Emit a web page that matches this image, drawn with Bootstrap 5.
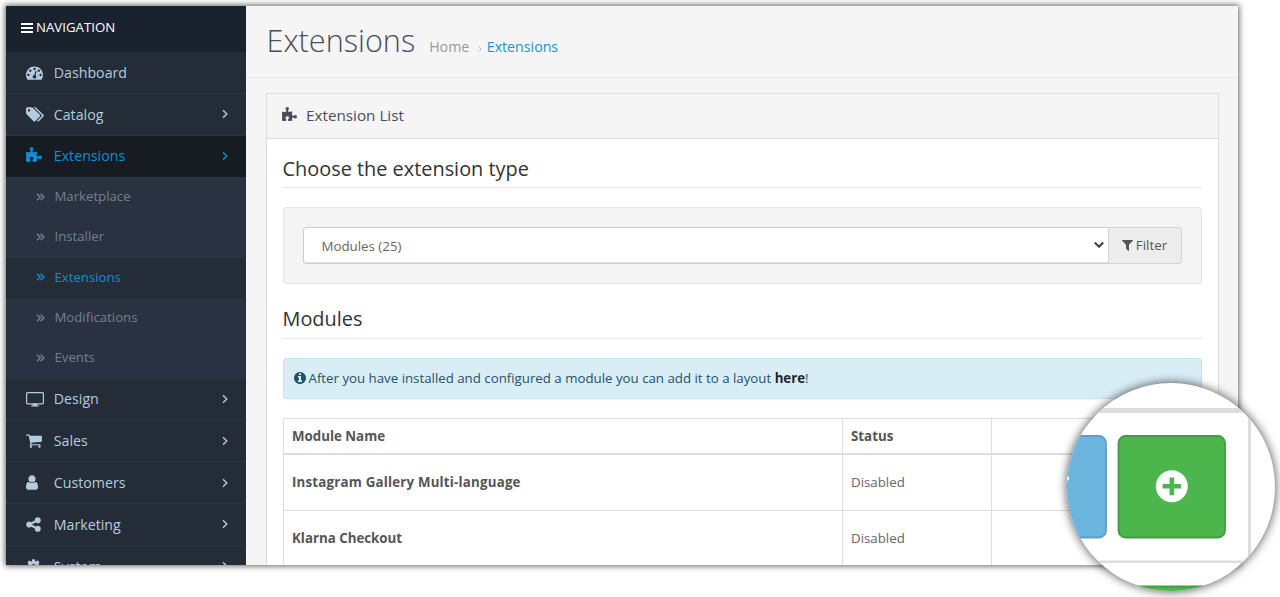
<!DOCTYPE html>
<html lang="en">
<head>
<meta charset="utf-8">
<meta name="viewport" content="width=device-width, initial-scale=1">
<title>Extensions</title>
<link href="https://cdn.jsdelivr.net/npm/bootstrap@5.3.0/dist/css/bootstrap.min.css" rel="stylesheet">
<style>
body{font-family:"Open Sans","Noto Sans",sans-serif;font-size:12.5px;color:#666;background:#fff;height:597px;overflow:hidden;position:relative}
svg{fill:currentColor;display:block;flex:none}
.app-window{margin:6px 0 0 6px;width:1232px;height:558.6px;background:#f5f5f5;box-shadow:0 0 6px 1px rgba(0,0,0,.62)}
.side{width:239.5px;background:#242d37;flex:none}
.side-head{height:46px;background:#1a222e;color:#fff;font-size:13.25px;padding-left:15px;padding-bottom:3px;gap:3px}
.menu-row{height:41.8px;font-size:14.2px;color:#b3cbdd;padding:0 17.8px 0 20px;border-bottom:1px solid #2a3641;text-decoration:none}
.menu-row .ico{width:27.8px}
.menu-row.on{background:#171b22;color:#0d8fd6;border-color:#171b22}
.sub-row{height:40.25px;font-size:13.2px;color:#74808f;padding:0 0 1.2px 30px;background:#2a3140;text-decoration:none}
.sub-row svg{margin-right:9.5px}
.sub-row.on{background:#242d37;color:#0d8fd6}
.chev{fill:none;stroke:currentColor;stroke-width:1.4}
.page-top{height:71.5px;border-bottom:1px solid #e8e8e8;padding:0 0 0 21px}
.page-top h1{font-weight:300;font-size:30.6px;color:#4c4d5a;line-height:69px}
.crumbs{font-size:14.2px;color:#999;margin-left:14px}
.crumbs a.here{color:#1e91cf;text-decoration:none}
.crumbs svg{stroke:#bbb;stroke-width:1;margin:0 4.5px 0 9px}
.panel-box{margin:15.4px 19.5px 0 20.5px;border:1px solid #dcdcdc;height:600px;background:#fff}
.panel-title{height:44.9px;background:#f5f5f5;border-bottom:1px solid #dcdcdc;font-size:15.25px;color:#4c4d5a;padding:0 0 1px 15px;gap:9px}
.panel-in{padding:0 15.5px}
.sec{font-size:19.9px;color:#333;border-bottom:1px solid #e5e5e5;margin:0;font-weight:400}
.well-box{height:77px;background:#f4f4f4;border:1px solid #e5e5e5;border-radius:3px;padding:19px;margin:19px 0 19px}
.well-box .form-select{font-size:13.3px;color:#666;border-color:#ccc;border-radius:3px 0 0 3px;padding:1px 18px 0;background-image:none;height:37px;box-shadow:inset 0 -1px 0 #e3e3e3;line-height:35px}
.btn-filter{width:74px;height:37px;background:#ededed;border:1px solid #d3d3d3;color:#555;font-size:13.4px;border-radius:0 3px 3px 0;padding:0 1px 0 0;gap:3px}
.arrow-down{right:78px;top:13px;z-index:6;position:absolute;fill:none;stroke:#444;stroke-width:2.2}
.note{height:41px;background:#d9edf6;border:1px solid #bce8f1;border-radius:3px;color:#245269;padding:1px 10px 0;font-size:13.27px;gap:3px;margin:19px 0 19px}
.note svg{margin-bottom:2px}
.note b{color:#1b2730}
.grid-table{font-size:13.3px;color:#666;border:1px solid #e2e2e2;table-layout:fixed;--bs-table-color:#666;--bs-table-bg:#fff}
.grid-table th,.grid-table td{border:1px solid #ddd;padding:1px 8px 0 8.5px;vertical-align:middle}
.grid-table th{height:36px;border-bottom:2px solid #ddd;color:#555}
.grid-table td{height:56px}
.grid-table td b{color:#555}
.grid-table .wide-name{letter-spacing:.2px}
.lens{position:absolute;left:1067px;top:383px;width:207.5px;height:207.5px;border-radius:50%;background:#fff;box-shadow:0 0 10px 1px rgba(0,0,0,.6);overflow:hidden}
</style>
</head>
<body>
<svg width="0" height="0" class="d-none">
<symbol id="gauge" viewBox="0 0 1792 1792"><path d="M384 1152q0-53-37.5-90.5t-90.5-37.5-90.5 37.5-37.5 90.5 37.5 90.5 90.5 37.5 90.5-37.5 37.5-90.5zm192-448q0-53-37.5-90.5t-90.5-37.5-90.5 37.5-37.5 90.5 37.5 90.5 90.5 37.5 90.5-37.5 37.5-90.5zm428 481l101-382q6-26-7.5-48.5t-38.5-29.5-48 6.5-30 39.5l-101 382q-60 5-107 43.5t-63 98.5q-20 77 20 146t117 89 146-20 89-117q16-60-6-117t-72-91zm660-33q0-53-37.5-90.5t-90.5-37.5-90.5 37.5-37.5 90.5 37.5 90.5 90.5 37.5 90.5-37.5 37.5-90.5zm-640-640q0-53-37.5-90.5t-90.5-37.5-90.5 37.5-37.5 90.5 37.5 90.5 90.5 37.5 90.5-37.5 37.5-90.5zm448 192q0-53-37.5-90.5t-90.5-37.5-90.5 37.5-37.5 90.5 37.5 90.5 90.5 37.5 90.5-37.5 37.5-90.5zm320 448q0 261-141 483-19 29-54 29h-1402q-35 0-54-29-141-221-141-483 0-182 71-348t191-286 286-191 348-71 348 71 286 191 191 286 71 348z"/></symbol>
<symbol id="tags" viewBox="0 0 1920 1792"><path d="M448 448q0-53-37.5-90.5t-90.5-37.5-90.5 37.5-37.5 90.5 37.5 90.5 90.5 37.5 90.5-37.5 37.5-90.5zm1067 576q0 53-37 90l-491 492q-39 37-91 37-53 0-90-37l-715-716q-38-37-64.5-101t-26.5-117v-416q0-52 38-90t90-38h416q53 0 117 26.5t102 64.5l715 714q37 39 37 91zm384 0q0 53-37 90l-491 492q-39 37-91 37-36 0-59-14t-53-45l470-470q37-37 37-90 0-52-37-91l-715-714q-38-38-102-64.5t-117-26.5h224q53 0 117 26.5t102 64.5l715 714q37 39 37 91z"/></symbol>
<symbol id="puzzle" viewBox="64 0 1664 1792"><path d="M1728 1098q0 81-44.5 135t-123.5 54q-41 0-77.5-17.5t-59-38-56.5-38-71-17.5q-110 0-110 124 0 39 16 115t15 115v5q-22 0-33 1-34 3-97.5 11.5t-115.5 13.5-98 5q-61 0-103-26.5t-42-83.5q0-37 17.5-71t38-56.5 38-59 17.5-77.5q0-79-54-123.5t-135-44.5q-84 0-143 45.5t-59 127.5q0 43 15 83t33.5 64.5 33.5 53 15 50.5q0 45-46 89-37 35-117 35-95 0-245-24-9-2-27.5-4t-27.5-4l-13-2q-1 0-3-1-2 0-2-1v-1024q2 1 17.5 3.5t34 5 21.5 3.5q150 24 245 24 80 0 117-35 46-44 46-89 0-22-15-50.5t-33.5-53-33.5-64.5-15-83q0-82 59-127.5t144-45.5q80 0 134 44.5t54 123.5q0 41-17.5 77.5t-38 59-38 56.5-17.5 71q0 57 42 83.5t103 26.5q64 0 180-15t163-17v2q-1 2-3.5 17.5t-5 34-3.5 21.5q-24 150-24 245 0 80 35 117 44 46 89 46 22 0 50.5-15t53-33.5 64.5-33.5 83-15q82 0 127.5 59t45.5 143z"/></symbol>
<symbol id="desktop" viewBox="0 0 18 15"><rect x=".6" y=".6" width="16.8" height="11.2" rx="1" fill="none" stroke="currentColor" stroke-width="1.2"/><path d="M7 11.8h4l.5 1.7h1.3v1H5.2v-1h1.3z"/></symbol>
<symbol id="cart" viewBox="64 0 1664 1792"><path d="M704 1536q0 52-38 90t-90 38-90-38-38-90 38-90 90-38 90 38 38 90zm896 0q0 52-38 90t-90 38-90-38-38-90 38-90 90-38 90 38 38 90zm128-1088v512q0 24-16.5 42.5t-40.5 21.5l-1044 122q13 60 13 70 0 16-24 64h920q26 0 45 19t19 45-19 45-45 19h-1024q-26 0-45-19t-19-45q0-11 8-31.5t16-36 21.5-40 15.5-29.5l-177-823h-204q-26 0-45-19t-19-45 19-45 45-19h256q16 0 28.5 6.5t19.5 15.5 13 24.5 8 26 5.5 29.5 4.5 26h1201q26 0 45 19t19 45z"/></symbol>
<symbol id="user" viewBox="256 0 1280 1792"><path d="M1536 1399q0 109-62.5 187t-150.5 78h-854q-88 0-150.5-78t-62.5-187q0-85 8.5-160.5t31.5-152 58.5-131 94-89 134.5-34.5q131 128 313 128t313-128q76 0 134.5 34.5t94 89 58.5 131 31.5 152 8.5 160.5zm-256-887q0 159-112.5 271.5t-271.5 112.5-271.5-112.5-112.5-271.5 112.5-271.5 271.5-112.5 271.5 112.5 112.5 271.5z"/></symbol>
<symbol id="share" viewBox="128 0 1536 1792"><path d="M1344 1024q133 0 226.5 93.5t93.5 226.5-93.5 226.5-226.5 93.5-226.5-93.5-93.5-226.5q0-12 2-34l-360-180q-92 86-218 86-133 0-226.5-93.5t-93.5-226.5 93.5-226.5 226.5-93.5q126 0 218 86l360-180q-2-22-2-34 0-133 93.5-226.5t226.5-93.5 226.5 93.5 93.5 226.5-93.5 226.5-226.5 93.5q-126 0-218-86l-360 180q2 22 2 34t-2 34l360 180q92-86 218-86z"/></symbol>
<symbol id="cog" viewBox="128 0 1536 1792"><path d="M1152 896q0-106-75-181t-181-75-181 75-75 181 75 181 181 75 181-75 75-181zm512-109v222q0 12-8 23t-20 13l-185 28q-19 54-39 91 35 50 107 138 10 12 10 25t-9 23q-27 37-99 108t-94 71q-12 0-26-9l-138-108q-44 23-91 38-16 136-29 186-7 28-36 28h-222q-14 0-24.5-8.5t-11.5-21.5l-28-184q-49-16-90-37l-141 107q-10 9-25 9-14 0-25-11-126-114-165-168-7-10-7-23 0-12 8-23 15-21 51-66.5t54-70.5q-27-50-41-99l-183-27q-13-2-21-12.5t-8-23.5v-222q0-12 8-23t19-13l186-28q14-46 39-92-40-57-107-138-10-12-10-24 0-10 9-23 26-36 98.5-107.5t94.5-71.5q13 0 26 10l138 107q44-23 91-38 16-136 29-186 7-28 36-28h222q14 0 24.5 8.5t11.5 21.5l28 184q49 16 90 37l142-107q9-9 24-9 13 0 25 10 129 119 165 170 7 8 7 22 0 12-8 23-15 21-51 66.5t-54 70.5q26 50 41 98l183 28q13 2 21 12.5t8 23.5z"/></symbol>
<symbol id="funnel" viewBox="192 0 1408 1792"><path d="M1595 295q17 41-14 70l-493 493v742q0 42-39 59-13 5-25 5-27 0-45-19l-256-256q-19-19-19-45v-486l-493-493q-31-29-14-70 17-39 59-39h1280q42 0 59 39z"/></symbol>
<symbol id="info" viewBox="128 128 1536 1536"><path d="M1152 1376v-160q0-14-9-23t-23-9h-96v-512q0-14-9-23t-23-9h-320q-14 0-23 9t-9 23v160q0 14 9 23t23 9h96v320h-96q-14 0-23 9t-9 23v160q0 14 9 23t23 9h448q14 0 23-9t9-23zm-128-896v-160q0-14-9-23t-23-9h-192q-14 0-23 9t-9 23v160q0 14 9 23t23 9h192q14 0 23-9t9-23zm640 416q0 209-103 385.5t-279.5 279.5-385.5 103-385.5-103-279.5-279.5-103-385.5 103-385.5 279.5-279.5 385.5-103 385.5 103 279.5 279.5 103 385.5z"/></symbol>
<symbol id="angle" viewBox="0 0 6 10"><path d="M1 1.2l3.8 3.8L1 8.800"/></symbol>
<symbol id="dbl" viewBox="0 0 9 8"><path d="M1 .7l3.3 3.3L1 7.3M4.6 .7l3.3 3.3L4.6 7.3"/></symbol>
</svg>

<div class="app-window d-flex">
  <nav class="side overflow-hidden">
    <div class="side-head d-flex align-items-center"><svg width="12" height="10" viewBox="0 0 12 10"><path d="M0 0h12v2H0zM0 4h12v2H0zM0 8h12v2H0z"/></svg>NAVIGATION</div>
    <a class="menu-row d-flex align-items-center"><span class="ico"><svg width="17" height="17"><use href="#gauge"/></svg></span>Dashboard</a>
    <a class="menu-row d-flex align-items-center"><span class="ico"><svg width="18" height="17"><use href="#tags"/></svg></span>Catalog<svg class="chev ms-auto" width="6" height="10"><use href="#angle"/></svg></a>
    <a class="menu-row on d-flex align-items-center"><span class="ico"><svg width="16" height="17"><use href="#puzzle"/></svg></span>Extensions<svg class="chev ms-auto" width="6" height="10"><use href="#angle"/></svg></a>
    <a class="sub-row d-flex align-items-center"><svg class="chev" width="9" height="8"><use href="#dbl"/></svg>Marketplace</a>
    <a class="sub-row d-flex align-items-center"><svg class="chev" width="9" height="8"><use href="#dbl"/></svg>Installer</a>
    <a class="sub-row on d-flex align-items-center"><svg class="chev" width="9" height="8"><use href="#dbl"/></svg>Extensions</a>
    <a class="sub-row d-flex align-items-center"><svg class="chev" width="9" height="8"><use href="#dbl"/></svg>Modifications</a>
    <a class="sub-row d-flex align-items-center"><svg class="chev" width="9" height="8"><use href="#dbl"/></svg>Events</a>
    <a class="menu-row d-flex align-items-center"><span class="ico"><svg width="18" height="15"><use href="#desktop"/></svg></span>Design<svg class="chev ms-auto" width="6" height="10"><use href="#angle"/></svg></a>
    <a class="menu-row d-flex align-items-center"><span class="ico"><svg width="16" height="17"><use href="#cart"/></svg></span>Sales<svg class="chev ms-auto" width="6" height="10"><use href="#angle"/></svg></a>
    <a class="menu-row d-flex align-items-center"><span class="ico"><svg width="12" height="17"><use href="#user"/></svg></span>Customers<svg class="chev ms-auto" width="6" height="10"><use href="#angle"/></svg></a>
    <a class="menu-row d-flex align-items-center"><span class="ico"><svg width="15" height="17"><use href="#share"/></svg></span>Marketing<svg class="chev ms-auto" width="6" height="10"><use href="#angle"/></svg></a>
    <a class="menu-row d-flex align-items-center"><span class="ico"><svg width="15" height="17"><use href="#cog"/></svg></span>System<svg class="chev ms-auto" width="6" height="10"><use href="#angle"/></svg></a>
  </nav>
  <main class="flex-grow-1 overflow-hidden">
    <div class="page-top d-flex align-items-baseline">
      <h1 class="m-0">Extensions</h1>
      <div class="crumbs d-flex align-items-baseline"><span>Home</span><svg class="chev" width="4" height="6" viewBox="0 0 4 6"><path d="M.6.5l2.4 2.5L.6 5.5"/></svg><a class="here" href="#">Extensions</a></div>
    </div>
    <div class="panel-box">
      <div class="panel-title d-flex align-items-center"><svg width="15" height="16"><use href="#puzzle"/></svg>Extension List</div>
      <div class="panel-in">
        <h3 class="sec" style="height:49px;line-height:59px">Choose the extension type</h3>
        <div class="well-box">
          <div class="input-group flex-nowrap position-relative">
            <select class="form-select"><option>Modules (25)</option></select>
            <svg class="arrow-down" width="10" height="10" viewBox="0 0 10 10"><path d="M.8 2.5L5 6.7l4.2-4.2"/></svg>
            <button class="btn btn-filter d-flex align-items-center justify-content-center"><svg width="11" height="14"><use href="#funnel"/></svg>Filter</button>
          </div>
        </div>
        <h3 class="sec" style="height:36px;line-height:31px">Modules</h3>
        <div class="note d-flex align-items-center"><svg width="12" height="12"><use href="#info"/></svg><span>After you have installed and configured a module you can add it to a layout <b>here</b>!</span></div>
        <table class="table grid-table m-0">
          <colgroup><col style="width:559px"><col style="width:149.5px"><col></colgroup>
          <tr><th>Module Name</th><th>Status</th><th></th></tr>
          <tr><td><b class="wide-name">Instagram Gallery Multi-language</b></td><td>Disabled</td><td></td></tr>
          <tr><td><b>Klarna Checkout</b></td><td>Disabled</td><td></td></tr>
        </table>
      </div>
    </div>
  </main>
</div>

<div class="lens">
  <svg width="208" height="208" viewBox="1067 383 208 208">
    <path fill="#ddd" d="M1067 408h182v5h-182zM1248 413h3v148h-3zM1067 560.5h208v2.5h-208z"/>
    <rect x="1000.5" y="436" width="105.5" height="101.5" rx="7" fill="#6cb5de" stroke="#5c9fca" stroke-width="1.8"/>
    <circle cx="1067" cy="478.5" r="2.2" fill="#fff"/>
    <rect x="1118.5" y="436" width="106.5" height="101.5" rx="7" fill="#4cb64c" stroke="#3f9f40" stroke-width="1.8"/>
    <rect x="1118.5" y="586.5" width="106.5" height="100" rx="7" fill="#4cb64c" stroke="#3f9f40" stroke-width="1.8"/>
    <circle cx="1171.8" cy="486.3" r="16" fill="#fff"/>
    <path fill="#4cb64c" d="M1169.5 477.5h4.6v6.5h6.9v4.6h-6.9v6.7h-4.6v-6.7h-6.9v-4.6h6.9z"/>
  </svg>
</div>
<script src="https://cdn.jsdelivr.net/npm/bootstrap@5.3.0/dist/js/bootstrap.bundle.min.js"></script>
</body>
</html>
